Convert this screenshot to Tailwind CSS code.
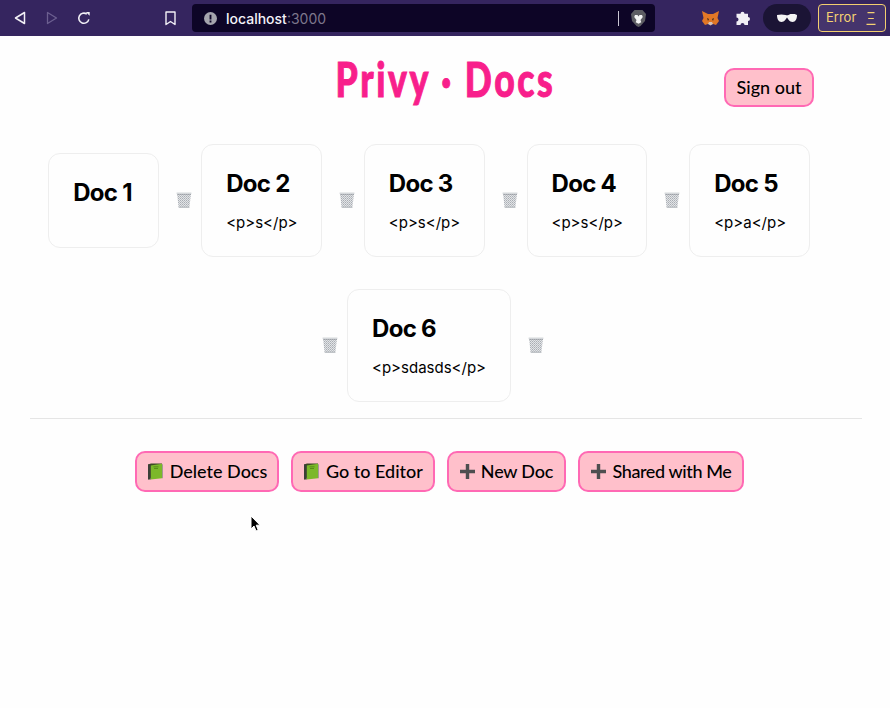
<!doctype html>
<html>
<head>
<meta charset="utf-8">
<script src="https://cdn.jsdelivr.net/npm/@tailwindcss/browser@4"></script>
</head>
<body class="relative w-[890px] h-[708px] overflow-hidden bg-[#fefefe] font-['Inter',sans-serif]">
<svg width="0" height="0" class="absolute">
  <defs>
    <pattern id="mesh" width="2" height="2" patternUnits="userSpaceOnUse"><rect width="2" height="2" fill="#e2e4e7"/><rect width="1" height="1" fill="#a9adb3"/><rect x="1" y="1" width="1" height="1" fill="#bcc0c4"/></pattern>
    <symbol id="trash" viewBox="0 0 16 16">
      <path d="M1 1.500h14L13.400 15.200a.8.8 0 0 1-.8.8H3.400a.8.8 0 0 1-.8-.8z" fill="url(#mesh)"/>
      <path d="M.6 .5h14.800v1.600H.6z" fill="#d5d8db"/>
      <path d="M1 2.100h14v.5H1z" fill="#8d9196"/>
      <path d="M2.700 14.400h10.600l-.1 1.600H2.800z" fill="#c0c4c8"/>
    </symbol>
    <symbol id="book" viewBox="0 0 16 17">
      <path d="M1 1.500 4 .5h11v14H4l-3 2z" fill="#3e4a25"/>
      <path d="M3.500 2.400 15 .8v14.400l-11.500 1.400z" fill="#7cb82a"/>
      <path d="M1 1.500h2.600v15H1z" fill="#3c3f38"/>
      <path d="M15 1v14.400l.8-.4V1.400z" fill="#8c8f88"/>
      <path d="M6.500 3.500h5v.8h-5zM7 5.200h4v.7H7z" fill="#4d7f16"/>
    </symbol>
    <symbol id="plus" viewBox="0 0 14 14"><path d="M5.400 0h3.200v5.400H14v3.200H8.600V14H5.400V8.600H0V5.400h5.400z" fill="#4e4e50"/></symbol>
  </defs>
</svg>

<header class="h-9 bg-[#35255f] flex items-center relative">
  <div class="flex items-center w-[192px] pl-[13px]">
    <svg class="w-3.5 h-3.5" viewBox="0 0 14 14" fill="none" stroke="#f2f0f6" stroke-width="1.500" stroke-linejoin="round"><path d="M11.500 1.500v11L2.500 7z"/></svg>
    <svg class="w-3.5 h-3.5 ml-[18px]" viewBox="0 0 14 14" fill="none" stroke="#6c5f90" stroke-width="1.300" stroke-linejoin="round"><path d="M2.500 1.500v11L11.500 7z"/></svg>
    <svg class="w-[14px] h-[14px] ml-[18px]" viewBox="0 0 16 16" fill="none" stroke="#f2f0f6" stroke-width="1.800"><path d="M13.500 9.500A5.800 5.800 0 1 1 11.200 3.500"/><path d="M10 1h4.500v4.500z" fill="#f2f0f6" stroke="none"/></svg>
    <svg class="w-[11px] h-[15px] ml-[74px]" viewBox="0 0 11 15" fill="none" stroke="#f2f0f6" stroke-width="1.400" stroke-linejoin="round"><path d="M1 1h9v12.500L5.500 10.500 1 13.500z"/></svg>
  </div>
  <div class="w-[463px] h-7 rounded bg-[#0d0526] flex items-center pl-[12px] pr-[9px] text-[14px] font-medium">
    <svg class="w-[13px] h-[13px] mr-[9px]" viewBox="0 0 14 14"><circle cx="7" cy="7" r="7" fill="#a5a5ad"/><path d="M6 3h2v5H6zM6 9.200h2v2H6z" fill="#0d0526"/></svg>
    <span class="text-[#f4f2f8]">localhost</span><span class="text-[#7d778c] font-normal">:3000</span>
    <span class="ml-auto w-px h-[15px] bg-[#c9c6d2]"></span>
    <svg class="w-[15px] h-[17px] ml-[12px]" viewBox="0 0 15 17"><path d="M3.500 0h8L15 4l-1 7-4.500 5-2 1-2-1L1 11 0 4z" fill="#5d5d63"/><path d="M4 5h2.500L7.500 6.500 8.500 5H11l.8 2L9.500 10l.8 2.200-2.800 1.600-2.800-1.600.8-2.200L3.200 7z" fill="#f4f4f4"/></svg>
  </div>
  <div class="flex items-center flex-1 pl-[47px]">
    <svg class="w-[17px] h-4" viewBox="0 0 17 16"><path d="M0 1l6 3h5l6-3-1.500 7L17 11l-3 4-3-1H6l-3 1-3-4 1.500-3z" fill="#e17726"/><path d="M5 8l2 1-1 2zM12 8l-2 1 1 2z" fill="#3c2a1a"/><path d="M6 14l1-2h3l1 2-2.500 1.500z" fill="#d7c1b3"/></svg>
    <svg class="w-[15px] h-[15px] ml-[16px]" viewBox="0 0 15 15"><path d="M5.500 2.800a2 2 0 0 1 4 0H13v3.300a2 2 0 0 1 0 4V14H9.500a2 2 0 0 0-4 0H1.500v-3.500a2 2 0 0 0 0-4V2.800z" fill="#f1eff5"/></svg>
    <div class="ml-[13px] w-12 h-7 rounded-full bg-[#1b1435] flex items-center justify-center">
      <svg class="w-5 h-[9px]" viewBox="0 0 20 9"><path d="M0 1c3-.8 6-.8 8.500 0 1 .3 2 .3 3 0C14-.8 17-.8 20 1c0 4-1.500 7-4.500 7S11 5 10 3.500C9 5 7.500 8 4.500 8S0 5 0 1z" fill="#f4f4f4"/></svg>
    </div>
    <div class="ml-[7px] w-[68px] h-7 rounded border border-[#f3cf6f] bg-[#45346c] flex items-center pl-[7px] text-[13px] text-[#f6d272]">
      Error
      <svg class="w-2.5 h-[13px] ml-[10px]" viewBox="0 0 10 13" stroke="#f6d272" stroke-width="1.200"><path d="M1.500 .6h7M2.200 6.500h5.600M.5 12.400h9"/></svg>
    </div>
  </div>
</header>

<div class="grid grid-cols-[1fr_auto_1fr] items-start h-[108px]">
  <div></div>
  <h1 class="mt-[17px] text-[#f81f8b] text-[48px] leading-[52px] font-black tracking-[3.500px] whitespace-nowrap scale-x-[0.74] [-webkit-text-stroke:1px_#f81f8b] font-['Lato',sans-serif]">Privy · Docs</h1>
  <div class="flex justify-end pr-[76px] pt-[32px]">
    <button class="w-[90px] h-[39px] rounded-[10px] border-2 border-[#ff69b4] bg-[#ffc0cb] text-black text-[18px] font-['Lato',sans-serif] font-medium">Sign out</button>
  </div>
</div>

<main class="pr-[15px] flex justify-center">
  <div class="w-[790px] flex flex-wrap justify-center items-center gap-y-8">
    <article class="mr-[17px] w-[111px] h-[95px] rounded-xl border border-[#eeeeee] px-6 pt-[25px]">
      <h2 class="text-2xl leading-[28px] font-bold tracking-[-0.7px] whitespace-nowrap text-black">Doc 1</h2>
    </article>
    <svg class="w-4 h-4 mr-[9px] -translate-y-px"><use href="#trash"/></svg>
    <article class="mr-[17px] w-[120.700px] h-[113px] rounded-xl border border-[#eeeeee] px-6 pt-[25px]">
      <h2 class="text-2xl leading-[28px] font-bold tracking-[-0.7px] whitespace-nowrap text-black">Doc 2</h2>
      <p class="mt-[13px] text-[15px] leading-6 text-black whitespace-nowrap">&lt;p&gt;s&lt;/p&gt;</p>
    </article>
    <svg class="w-4 h-4 mr-[9px] -translate-y-px"><use href="#trash"/></svg>
    <article class="mr-[17px] w-[120.700px] h-[113px] rounded-xl border border-[#eeeeee] px-6 pt-[25px]">
      <h2 class="text-2xl leading-[28px] font-bold tracking-[-0.7px] whitespace-nowrap text-black">Doc 3</h2>
      <p class="mt-[13px] text-[15px] leading-6 text-black whitespace-nowrap">&lt;p&gt;s&lt;/p&gt;</p>
    </article>
    <svg class="w-4 h-4 mr-[9px] -translate-y-px"><use href="#trash"/></svg>
    <article class="mr-[17px] w-[120.700px] h-[113px] rounded-xl border border-[#eeeeee] px-6 pt-[25px]">
      <h2 class="text-2xl leading-[28px] font-bold tracking-[-0.7px] whitespace-nowrap text-black">Doc 4</h2>
      <p class="mt-[13px] text-[15px] leading-6 text-black whitespace-nowrap">&lt;p&gt;s&lt;/p&gt;</p>
    </article>
    <svg class="w-4 h-4 mr-[9px] -translate-y-px"><use href="#trash"/></svg>
    <article class="mr-[17px] w-[120.700px] h-[113px] rounded-xl border border-[#eeeeee] px-6 pt-[25px]">
      <h2 class="text-2xl leading-[28px] font-bold tracking-[-0.7px] whitespace-nowrap text-black">Doc 5</h2>
      <p class="mt-[13px] text-[15px] leading-6 text-black whitespace-nowrap">&lt;p&gt;a&lt;/p&gt;</p>
    </article>
    <svg class="w-4 h-4 mr-[9px] -translate-y-px"><use href="#trash"/></svg>
    <article class="mr-[17px] w-[164px] h-[113px] rounded-xl border border-[#eeeeee] px-6 pt-[25px]">
      <h2 class="text-2xl leading-[28px] font-bold tracking-[-0.7px] whitespace-nowrap text-black">Doc 6</h2>
      <p class="mt-[13px] text-[15px] leading-6 text-black whitespace-nowrap">&lt;p&gt;sdasds&lt;/p&gt;</p>
    </article>
    <svg class="w-4 h-4 mr-[9px] -translate-y-px"><use href="#trash"/></svg>
  </div>
</main>

<hr class="mx-[30px] w-[832px] mt-4 border-t border-[#e5e5e5]">

<nav class="mt-[32px] pl-[135px] flex gap-3 font-['Lato',sans-serif] text-[18px] font-medium text-black">
  <button class="w-[144px] h-[41px] rounded-[10px] border-2 border-[#ff69b4] bg-[#ffc0cb] flex items-center justify-center gap-[7px]"><svg class="w-4 h-[17px]"><use href="#book"/></svg>Delete Docs</button>
  <button class="w-[144px] h-[41px] rounded-[10px] border-2 border-[#ff69b4] bg-[#ffc0cb] flex items-center justify-center gap-[7px]"><svg class="w-4 h-[17px]"><use href="#book"/></svg>Go to Editor</button>
  <button class="w-[119px] h-[41px] rounded-[10px] border-2 border-[#ff69b4] bg-[#ffc0cb] flex items-center justify-center gap-[6px] tracking-[-0.2px]"><svg class="w-[15px] h-[15px]"><use href="#plus"/></svg>New Doc</button>
  <button class="w-[166px] h-[41px] rounded-[10px] border-2 border-[#ff69b4] bg-[#ffc0cb] flex items-center justify-center gap-[7px] tracking-[-0.4px]"><svg class="w-[15px] h-[15px]"><use href="#plus"/></svg>Shared with Me</button>
</nav>

<svg class="absolute left-[250px] top-[515px] w-3 h-[18px]" viewBox="0 0 12 18"><path d="M1 1v13l3-3 2 5 2.200-1-2-4.800H10z" fill="#000" stroke="#fff" stroke-width="1"/></svg>
</body>
</html>
